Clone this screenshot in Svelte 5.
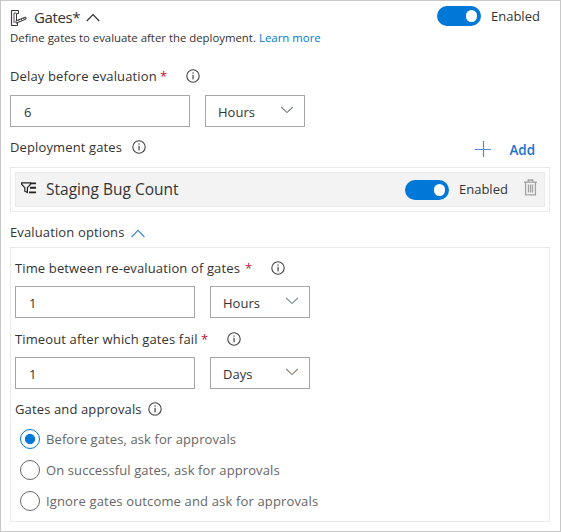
<script>
  let delay = $state('6');
  let interval = $state('1');
  let timeout = $state('1');
  let approval = $state(0);
  let gatesOn = $state(true);
  let gateOn = $state(true);

  const options = [
    { text: 'Before gates, ask for approvals', cls: 'o1' },
    { text: 'On successful gates, ask for approvals', cls: 'o2' },
    { text: 'Ignore gates outcome and ask for approvals', cls: 'o3' }
  ];
</script>

{#snippet info()}
  <svg class="info" width="14" height="14" viewBox="0 0 14 14">
    <circle cx="7" cy="7" r="6.2" fill="none" stroke="#444" stroke-width="1.1" />
    <rect x="6.5" y="3.4" width="1.1" height="1.3" fill="#333" />
    <rect x="6.5" y="5.8" width="1.1" height="4.6" fill="#333" />
  </svg>
{/snippet}

{#snippet chevron(color)}
  <svg class="down" width="14" height="8" viewBox="0 0 14 8">
    <path d="M1.2 1 L7 6.6 L12.8 1" fill="none" stroke={color} stroke-width="1.1" />
  </svg>
{/snippet}

<div class="panel">
  <header class="head">
    <svg class="gate" width="17" height="18" viewBox="0 0 17 18">
      <path d="M1.5 1.5H8.5V4.5H6.5V12.5H7.5V16.5H1.5Z" fill="#fff" stroke="#333" stroke-width="1" />
      <path d="M1.5 1.5V16.5" stroke="#68217a" stroke-width="1.2" />
      <path d="M4 4V14M4 4H6" fill="none" stroke="#555" stroke-width="1" />
      <path d="M6 11.8 L15.6 8 L16.2 10 L6 14.2 Z" fill="#fff" stroke="#333" stroke-width="1" />
      <path d="M8.4 11L9.6 12.7M11 10L12.2 11.6M13.4 9L14.6 10.6" stroke="#333" stroke-width="1" />
    </svg>
    <h2>Gates*</h2>
    <svg class="up" width="14" height="9" viewBox="0 0 14 9">
      <path d="M.8 8 L7 1.6 L13.2 8" fill="none" stroke="#333" stroke-width="1.2" />
    </svg>
    <button class="toggle" aria-label="Gates" onclick={() => (gatesOn = !gatesOn)}><i></i></button>
    <span class="enabled">Enabled</span>
  </header>
  <p class="sub"><span class="desc">Define gates to evaluate after the deployment.</span><a href="#more">Learn more</a></p>

  <div class="label l1"><span class="t-delay">Delay before evaluation</span><b>*</b>{@render info()}</div>
  <div class="fields">
    <input bind:value={delay} aria-label="Delay" />
    <div class="select"><span class="t-hours">Hours</span>{@render chevron('#777f8c')}</div>
  </div>

  <div class="label l2">
    <span class="t-dep">Deployment gates</span>{@render info()}
    <button class="add">
      <svg width="18" height="18" viewBox="0 0 18 18"><path d="M9.5 1V17M1 9.5H17" stroke="#4a8ddb" stroke-width="1.2" /></svg>
      <span>Add</span>
    </button>
  </div>

  <div class="gates">
    <div class="item">
      <svg class="filter" width="15" height="12" viewBox="0 0 15 12">
        <path d="M.6 .8H9.6V2.2L6.4 5.7V10.6L3.8 9.2V5.7L.6 2.2Z" fill="none" stroke="#222" stroke-width="1.2" />
        <path d="M10 1.4H15M9 5.8H15M8 10.4H15" stroke="#222" stroke-width="1.9" />
      </svg>
      <span class="name">Staging Bug Count</span>
      <button class="toggle" aria-label="Staging Bug Count" onclick={() => (gateOn = !gateOn)}><i></i></button>
      <span class="enabled">Enabled</span>
      <svg class="trash" width="13" height="17" viewBox="0 0 13 17">
        <path d="M0 3.2H13M4.2 3V1H8.8V3M1.6 3.5V15.8H11.4V3.5M4.5 5.5V13.5M6.5 5.5V13.5M8.5 5.5V13.5" fill="none" stroke="#a2a2a2" stroke-width="1.3" />
      </svg>
    </div>
  </div>

  <div class="label l3">
    <span class="t-eval">Evaluation options</span>
    <svg class="up2" width="14" height="9" viewBox="0 0 14 9">
      <path d="M.6 8 L7 1.4 L13.4 8" fill="none" stroke="#3f87d9" stroke-width="1.2" />
    </svg>
  </div>

  <section class="evaluation">
    <div class="label e1"><span class="t-time">Time between re-evaluation of gates</span><b>*</b>{@render info()}</div>
    <div class="fields">
      <input bind:value={interval} aria-label="Interval" />
      <div class="select"><span class="t-hours">Hours</span>{@render chevron('#7d8a94')}</div>
    </div>
    <div class="label e2"><span class="t-out">Timeout after which gates fail</span><b>*</b>{@render info()}</div>
    <div class="fields">
      <input bind:value={timeout} aria-label="Timeout" />
      <div class="select"><span class="t-days">Days</span>{@render chevron('#8f8072')}</div>
    </div>
    <div class="label e3"><span class="t-appr">Gates and approvals</span>{@render info()}</div>
    <div class="radios">
      {#each options as o, i}
        <button class="radio" class:on={approval === i} onclick={() => (approval = i)}>
          <i></i><span class={o.cls}>{o.text}</span>
        </button>
      {/each}
    </div>
  </section>
</div>

<style>
  .panel {
    box-sizing: border-box;
    width: 561px;
    height: 532px;
    border: 1px solid #c8c8c8;
    padding: 0 10px 0 9px;
    background: #fff;
    color: #333;
    font: 13px/20px 'Open Sans', 'Noto Sans', sans-serif;
    overflow: hidden;
  }
  button { border: 0; padding: 0; background: none; font: inherit; color: inherit; }
  svg, i { flex: none; display: block; }
  span, h2, a { white-space: nowrap; flex: none; }
  .head { display: flex; align-items: center; height: 30px; }
  .gate { margin-top: 3px; }
  h2 { width: 46px; margin: 2px 6px 0 7px; font-size: 15px; font-weight: 400; letter-spacing: -.4px; }
  .up { margin-top: 3px; }
  .toggle { box-sizing: border-box; width: 44px; height: 20px; flex: none; margin-left: auto; padding-right: 4px; border-radius: 10px; background: #0078d7; display: flex; align-items: center; justify-content: flex-end; }
  .toggle i { width: 11px; height: 12px; border-radius: 6px; background: #fff; }
  .enabled { width: 49px; margin-left: 10px; }
  .head .enabled { margin-right: 10px; }
  .sub { display: flex; height: 16px; margin: 0; font-size: 11.4px; line-height: 14px; }
  .desc { width: 249px; letter-spacing: -.01px; }
  a { color: #0078d7; text-decoration: none; }
  .label { display: flex; align-items: center; height: 20px; letter-spacing: .13px; }
  .label b { width: 6px; margin-left: 4px; color: #c0122f; font-weight: 400; }
  .info { margin-left: 20px; }
  .l1 { margin-top: 19px; }
  .fields { display: flex; gap: 15px; margin-top: 9px; }
  input { box-sizing: border-box; width: 180px; height: 32px; border: 1px solid #a6a6a6; border-radius: 0; padding: 2px 13px 0; color: #333; font: inherit; background: #fff; outline: 0; }
  .select { box-sizing: border-box; width: 100px; height: 32px; border: 1px solid #a6a6a6; padding: 2px 10px 0 12px; display: flex; align-items: center; justify-content: space-between; }
  .down { margin-top: -4px; }
  .l2 { margin-top: 11px; }
  .l2 > span { margin-top: -2px; }
  .l2 .info { margin: -2px 0 0 9px; }
  .e3 .info { margin-left: 8px; }
  .add { display: flex; align-items: center; gap: 17px; margin: 3px 15px 0 auto; color: #1a73cf; font-weight: 600; font-size: 13.4px; }
  .add svg { margin-top: -1px; }
  .gates { box-sizing: border-box; height: 45px; margin-top: 9px; border: 1px solid #eaeaea; padding: 4px; }
  .item { box-sizing: border-box; height: 35px; border: 1px solid #eaeaea; background: #f3f3f3; padding: 0 7px 0 5px; display: flex; align-items: center; }
  .filter { margin-top: -4px; }
  .name { margin: -1px 0 0 10px; font-size: 15.5px; }
  .item .enabled { margin-top: -1px; }
  .trash { margin: -4px 0 0 16px; }
  .l3 { margin-top: 10px; }
  .up2 { margin: 3px 0 0 8px; }
  .evaluation { box-sizing: border-box; height: 275px; margin-top: 5px; border: 1px solid #eaeaea; padding: 10px 4px 0; }
  .evaluation .fields { margin-top: 8px; }
  .e2 { margin-top: 11px; }
  .e3 { margin-top: 10px; }
  .radios { display: flex; flex-direction: column; gap: 11px; margin: 10px 0 0 5px; color: #666; }
  .radio { display: flex; align-items: center; height: 20px; letter-spacing: .1px; }
  .o3 { letter-spacing: .15px; }
  .radio i { box-sizing: border-box; width: 20px; height: 20px; margin-right: 6px; border: 1.4px solid #666; border-radius: 50%; }
  .radio.on i { border-color: #0078d7; background: radial-gradient(circle, #0078d7 4.7px, #fff 5.4px); }
  .t-delay { width: 146px; }
  .t-dep { width: 113px; }
  .t-eval { width: 113px; }
  .t-time { width: 226px; }
  .t-out { width: 182px; }
  .t-appr { width: 125px; }
</style>
